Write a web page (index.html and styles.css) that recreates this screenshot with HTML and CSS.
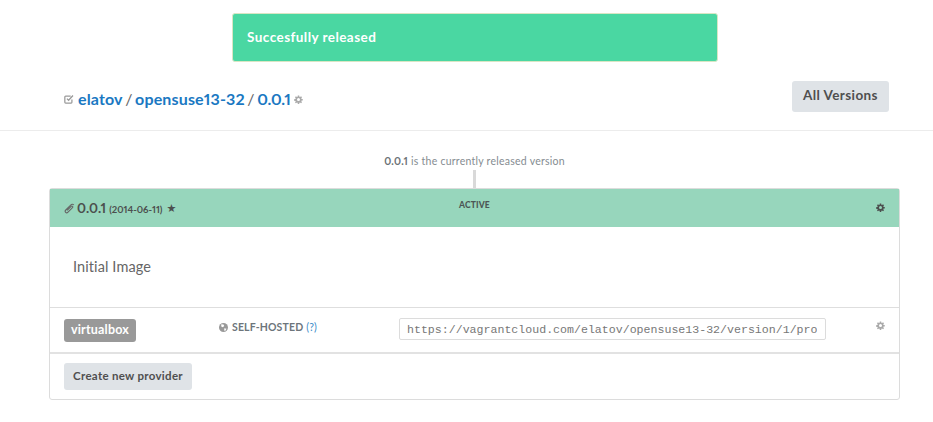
FILE: index.html
```html
<!DOCTYPE html>
<html lang="en">
<head>
<meta charset="utf-8">
<title>Version 0.0.1</title>
<link rel="stylesheet" href="styles.css">
</head>
<body>
<svg class="defs" width="0" height="0" aria-hidden="true">
  <symbol id="gear" viewBox="-1 -1 18 18">
    <path fill="currentColor" fill-rule="evenodd" d="M6.600 0h2.800l.4 2.300 1.300.6 2-1.300 1.900 1.900-1.400 2 .6 1.300 2.300.4v2.600l-2.300.4-.6 1.300 1.400 2-1.900 1.900-2-1.300-1.300.6-.4 2.300H6.600l-.4-2.300-1.300-.6-2 1.300L1 14.500l1.400-2-.6-1.300-2.300-.4V7.200l2.300-.4.6-1.300-1.400-2L2.900 1.600l2 1.300 1.300-.6zM8 5a3 3 0 1 0 0 6 3 3 0 0 0 0-6z"/>
  </symbol>
</svg>
<div class="alert">Succesfully released</div>
<header class="top">
  <h1 class="crumbs">
    <svg class="check" viewBox="0 0 12 12" width="10" height="10"><path d="M9.500 6.500V10a1 1 0 0 1-1 1H2a1 1 0 0 1-1-1V3.500a1 1 0 0 1 1-1h6" fill="none" stroke="currentColor" stroke-width="1.500"/><path d="M3.500 5.500l2 2L10.800 1.800" fill="none" stroke="currentColor" stroke-width="1.500"/></svg>
    <a href="#">elatov</a> <span class="sep">/</span> <a href="#">opensuse13-32</a> <span class="sep">/</span> <a class="ver" href="#">0.0.1</a>
    <svg class="gear-sm" width="9" height="9"><use href="#gear"/></svg>
  </h1>
  <a class="btn btn-lg" href="#">All Versions</a>
</header>
<main class="main">
  <p class="status"><b>0.0.1</b> is the currently released version</p>
  <div class="tail"></div>
  <section class="card">
    <div class="card-head">
      <div class="title">
        <svg class="clip" viewBox="0 0 14 14" width="11" height="11"><path d="M12.500 2.500c-1.300-1.300-2.800-1-4 .2L2.300 8.900c-1 1-1 2.200-.2 3s2 .8 3-.2l5.700-5.700c.6-.6.600-1.300.1-1.800s-1.200-.5-1.800.1L4 9.400" fill="none" stroke="currentColor" stroke-width="1.400"/></svg>
        <strong>0.0.1</strong> <span class="date">(2014-06-11)</span> <span class="star">★</span>
      </div>
      <div class="state">ACTIVE</div>
      <svg class="gear-head" width="9" height="9"><use href="#gear"/></svg>
    </div>
    <div class="desc">Initial Image</div>
    <div class="provider">
      <div class="col-name"><span class="tag">virtualbox</span></div>
      <div class="col-host">
        <svg class="globe" viewBox="0 0 12 12" width="9" height="9"><circle cx="6" cy="6" r="6" fill="currentColor"/><path d="M3 1.500l3 .5 1 2-2 1.500-2-1zM7 7l3 .5L8 11 7 9.500z" fill="#fff"/></svg>
        <span class="host">SELF-HOSTED</span> <a class="help" href="#">(?)</a>
      </div>
      <input class="url" type="text" readonly value="https://vagrantcloud.com/elatov/opensuse13-32/version/1/provider/virtualbox.box">
      <svg class="gear-row" width="9" height="9"><use href="#gear"/></svg>
    </div>
    <div class="foot"><a class="btn btn-sm" href="#">Create new provider</a></div>
  </section>
</main>
</body>
</html>
```
FILE: styles.css
```css
* { box-sizing: border-box; }
html, body { margin: 0; padding: 0; }
body { width: 933px; height: 422px; overflow: hidden; background: #fff; color: #555; font-family: "Lato", "Open Sans", sans-serif; font-variant-numeric: proportional-nums; }
.defs { display: block; height: 0; }
a { text-decoration: none; }
.alert { width: 486px; height: 49px; margin: 13px 0 0 232px; padding: 0 14px; background: #4ad7a2; border: 1px solid #d9e6c4; border-radius: 3px; color: #fff; font-size: 13.500px; font-weight: 700; line-height: 47px; letter-spacing: .45px; }
.top { height: 69px; border-bottom: 1px solid #ececec; padding: 19px 44px 0 64px; display: flex; justify-content: space-between; align-items: flex-start; }
.crumbs { margin: 0; padding-top: 7px; font-size: 16px; font-weight: 700; line-height: 22px; color: #666; display: flex; align-items: center; gap: 3px; letter-spacing: .15px; }
.crumbs a { color: #1a78c2; }
.crumbs .ver { letter-spacing: -.25px; }
.check { color: #999; margin-right: 1px; }
.sep { font-weight: 400; margin: 0 -.5px; }
.gear-sm { color: #aaa; margin-left: 1px; }
.btn { display: block; background: #dfe3e7; border-radius: 3px; color: #4f4f4f; font-weight: 700; text-align: center; }
.btn-lg { width: 97px; height: 31px; font-size: 13.500px; line-height: 29px; letter-spacing: .4px; }
.btn-sm { width: 128px; height: 27px; font-size: 11.500px; line-height: 26px; letter-spacing: .3px; }
.main { padding: 0 33px 0 49px; }
.status { margin: 0; height: 39px; padding-top: 21px; text-align: center; font-size: 10.500px; line-height: 18px; color: #858c91; letter-spacing: .25px; }
.status b { color: #6b7276; }
.tail { width: 3px; height: 18px; margin-left: 424px; background: #d9d9d9; }
.card { border: 1px solid #dcdcdc; border-radius: 3px; height: 212px; width: 851px; }
.card-head { height: 38px; background: #97d6bc; display: grid; grid-template-columns: 395px 1fr auto; align-items: start; padding: 0 14px; }
.title { display: flex; align-items: center; gap: 3px; height: 38px; color: #4c4f4e; }
.clip { color: #666; margin-right: -1px; }
.title strong { font-size: 13.500px; font-weight: 700; }
.date { font-size: 9.500px; font-weight: 700; padding-top: 2px; }
.star { font-size: 11px; margin-left: 1px; font-family: "DejaVu Sans", sans-serif; }
.state { font-size: 8.500px; font-weight: 900; color: #4c5655; padding-top: 11px; line-height: 10px; letter-spacing: .15px; }
.gear-head { color: #4c4f4e; margin-top: 14px; }
.desc { height: 81px; padding: 30px 0 0 23px; border-bottom: 1px solid #dedede; font-size: 14.500px; line-height: 20px; color: #666; letter-spacing: .1px; }
.provider { height: 46px; border-bottom: 2px solid #e2e2e2; display: grid; grid-template-columns: 155px 180px 427px auto; padding: 0 14px; align-items: start; }
.tag { display: inline-block; margin-top: 11px; width: 72px; height: 23px; background: #999; border-radius: 3px; color: #fff; font-size: 12.500px; font-weight: 700; line-height: 22px; text-align: center; letter-spacing: .2px; }
.col-host { margin-top: 12px; font-size: 10.500px; line-height: 14px; display: flex; align-items: center; gap: 3px; letter-spacing: .15px; }
.globe { color: #999; margin-right: 1px; }
.host { color: #6d757b; font-weight: 700; }
.help { color: #3a8bc8; font-weight: 400; }
.url { margin-top: 10px; width: 427px; height: 22px; border: 1px solid #dcdcdc; border-radius: 2px; padding: 0 8px 0 7px; font-family: "Liberation Mono", monospace; font-size: 11.600px; color: #777; outline: none; background: #fff; }
.gear-row { color: #aaa; margin: 13px 0 0 50px; }
.foot { padding: 9px 14px; }
```
